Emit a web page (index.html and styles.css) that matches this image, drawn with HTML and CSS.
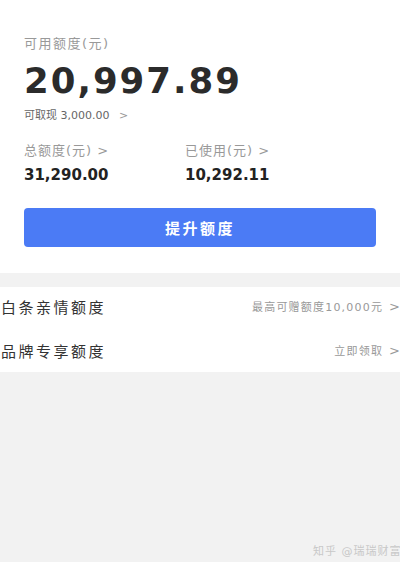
FILE: index.html
```html
<!DOCTYPE html>
<html lang="zh">
<head>
    <meta charset="UTF-8">
    <meta name="viewport" content="width=device-width, initial-scale=1.0">
    <title>额度</title>
    <link rel="stylesheet" href="styles.css">
</head>
<body>
    <!-- 额度概览 -->
    <section class="summary">
        <div class="label">可用额度(元)</div>
        <div class="amount">20,997.89</div>
        <div class="cash">可取现 3,000.00 <span class="arrow">&gt;</span></div>

        <div class="stats">
            <div class="stat">
                <div class="stat-label">总额度(元) &gt;</div>
                <div class="stat-value">31,290.00</div>
            </div>
            <div class="stat">
                <div class="stat-label">已使用(元) &gt;</div>
                <div class="stat-value">10,292.11</div>
            </div>
        </div>

        <button class="raise">提升额度</button>
    </section>

    <!-- 其他额度 -->
    <section class="list">
        <div class="row">
            <span class="row-title">白条亲情额度</span>
            <span class="row-extra">最高可赠额度10,000元<span class="chev">&gt;</span></span>
        </div>
        <div class="row">
            <span class="row-title">品牌专享额度</span>
            <span class="row-extra">立即领取<span class="chev">&gt;</span></span>
        </div>
    </section>

    <div class="watermark">知乎 @瑞瑞财富</div>
</body>
</html>
```

FILE: styles.css
```css
body {
    margin: 0;
    padding: 0;
    height: 562px;
    overflow: hidden;
    background-color: #f2f2f2;
    font-family: "DejaVu Sans", "Noto Sans CJK SC", sans-serif;
    color: #333;
    position: relative;
}
.summary {
    background-color: #fff;
    padding: 36px 24px 26px;
    margin-bottom: 14px;
}
.label {
    font-size: 13px;
    color: #999;
    line-height: 16px;
    letter-spacing: 1.5px;
}
.amount {
    font-size: 35.5px;
    font-weight: 700;
    line-height: 41px;
    margin-top: 8px;
    color: #2b2b2b;
    letter-spacing: 2px;
}
.cash {
    font-size: 11px;
    color: #666;
    line-height: 14px;
    margin-top: 8px;
}
.cash .arrow {
    margin-left: 6px;
    color: #999;
}
.stats {
    display: flex;
    margin-top: 20px;
}
.stat {
    width: 161px;
}
.stat-label {
    font-size: 13px;
    color: #999;
    line-height: 16px;
    letter-spacing: 1px;
}
.stat-value {
    font-size: 15px;
    font-weight: 700;
    color: #222;
    line-height: 18px;
    margin-top: 7px;
}
.raise {
    display: block;
    width: 100%;
    height: 39px;
    margin-top: 24px;
    border: none;
    border-radius: 4px;
    background-color: #4b7bf5;
    color: #fff;
    font-family: "Noto Sans CJK SC", sans-serif;
    font-size: 15px;
    font-weight: 700;
    letter-spacing: 2.5px;
}
.list {
    background-color: #fff;
    padding: 0 0 3px 1px;
    display: flex;
    flex-direction: column;
    gap: 6px;
}
.row {
    display: flex;
    justify-content: space-between;
    align-items: center;
    height: 38px;
}
.row-title {
    font-size: 15px;
    color: #333;
    letter-spacing: 2.5px;
}
.row-extra {
    font-size: 11px;
    color: #999;
    letter-spacing: 1.2px;
}
.row-extra .chev {
    margin-left: 6px;
    font-size: 13px;
    letter-spacing: 0;
}
.watermark {
    position: absolute;
    left: 313px;
    top: 542px;
    font-size: 11px;
    color: #c8c8c8;
    white-space: nowrap;
    letter-spacing: 1px;
}
```
